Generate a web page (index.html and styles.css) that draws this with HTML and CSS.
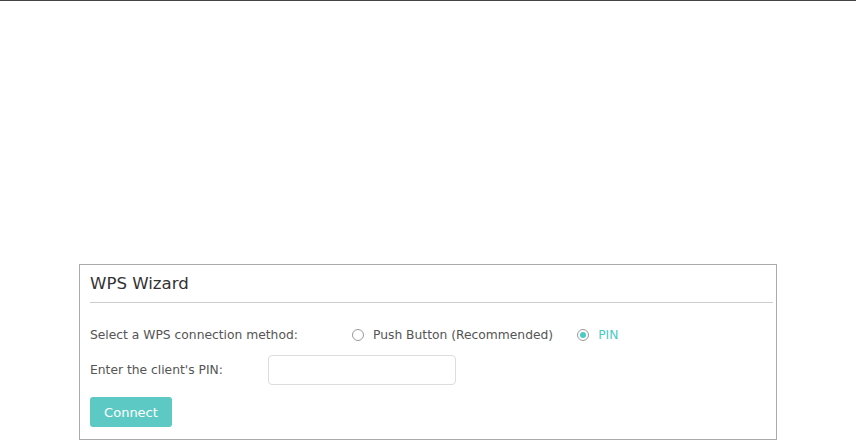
FILE: index.html
```html
<!DOCTYPE html>
<html lang="en">
<head>
    <meta charset="UTF-8">
    <title>WPS Wizard</title>
    <link rel="stylesheet" href="styles.css">
</head>
<body>

<div class="topbar"></div>

<div class="page">
    <div class="panel">
        <h2 class="panel-title">WPS Wizard</h2>

        <div class="row row-method">
            <span class="label label-wide">Select a WPS connection method:</span>
            <label class="radio">
                <span class="dot"></span>
                <span class="radio-text">Push Button (Recommended)</span>
            </label>
            <label class="radio checked">
                <span class="dot"></span>
                <span class="radio-text">PIN</span>
            </label>
        </div>

        <div class="row row-pin">
            <span class="label">Enter the client's PIN:</span>
            <input type="text" class="pin-input">
        </div>

        <button class="btn">Connect</button>
    </div>
</div>

</body>
</html>
```

FILE: styles.css
```css
body { margin: 0; font-family: "DejaVu Sans", Verdana, sans-serif; font-size: 12.3px; color: #555; background: #fff; }
.topbar { height: 1px; background: #444; }
.page { padding: 263px 0 0 79px; }
.panel { width: 683px; border: 1px solid #aaa; padding: 0 3px 12px 10px; }
.panel-title { margin: 0; height: 37px; line-height: 38px; font-size: 16.6px; font-weight: normal; color: #333; border-bottom: 1px solid #ccc; }
.row { display: flex; align-items: center; }
.row-method { margin-top: 20px; height: 24px; }
.row-pin { margin-top: 8px; height: 30px; }
.label { width: 178px; flex-shrink: 0; }
.label-wide { width: 262px; }
.radio { display: flex; align-items: center; margin-right: 24px; cursor: pointer; }
.dot { width: 10px; height: 10px; border: 1px solid #999; border-radius: 50%; margin-right: 9px; position: relative; }
.checked .dot::after { content: ""; position: absolute; left: 2px; top: 2px; width: 6px; height: 6px; border-radius: 50%; background: #4acbc4; }
.checked .radio-text { color: #4acbc4; }
.pin-input { width: 188px; height: 30px; box-sizing: border-box; border: 1px solid #ddd; border-radius: 4px; padding: 0 8px; font: inherit; outline: none; }
.btn { display: block; margin-top: 12px; width: 82px; height: 30px; background: #5dc9c4; color: #fff; border: none; border-radius: 3px; font-family: inherit; font-size: 13px; cursor: pointer; }
```
